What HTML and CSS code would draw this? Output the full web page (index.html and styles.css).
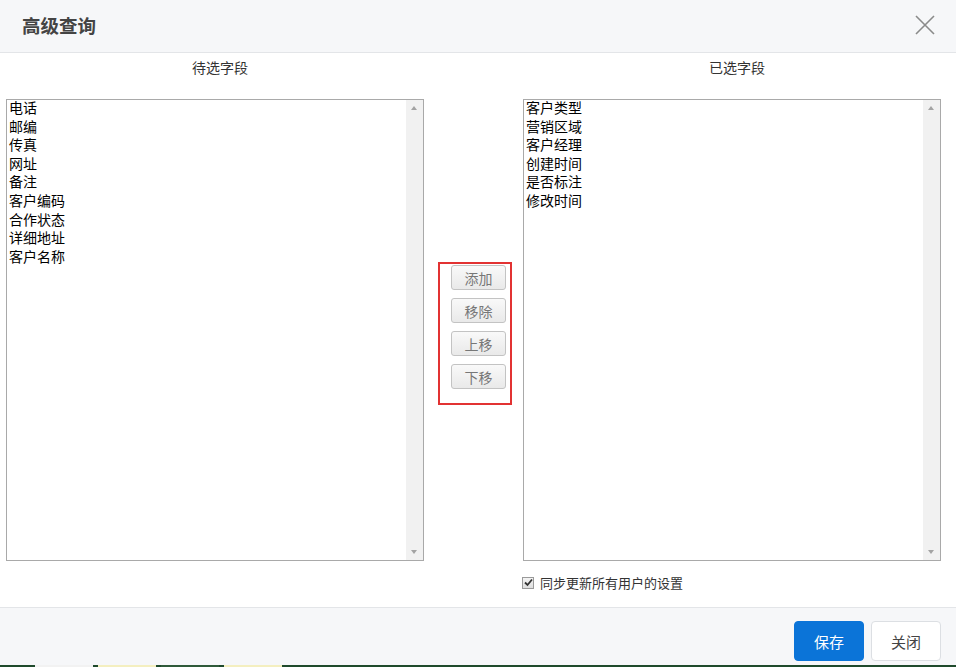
FILE: index.html
```html
<!DOCTYPE html>
<html lang="zh-CN">
<head>
    <meta charset="UTF-8">
    <title>高级查询</title>
    <link rel="stylesheet" href="styles.css">
</head>
<body>
<div class="dialog">
    <div class="dlg-head">
        <h3 class="dlg-title">高级查询</h3>
        <span class="dlg-close">
            <svg width="22" height="22" viewBox="0 0 22 22"><path d="M2 2L20 20M20 2L2 20" stroke="#8a8a8a" stroke-width="1.6" fill="none"/></svg>
        </span>
    </div>

    <div class="dlg-body">
        <div class="col">
            <p class="col-label">待选字段</p>
            <div class="listbox">
                <ul class="items">
                    <li>电话</li>
                    <li>邮编</li>
                    <li>传真</li>
                    <li>网址</li>
                    <li>备注</li>
                    <li>客户编码</li>
                    <li>合作状态</li>
                    <li>详细地址</li>
                    <li>客户名称</li>
                </ul>
                <div class="scroll"><span class="arr up"></span><span class="arr down"></span></div>
            </div>
        </div>

        <div class="mid">
            <div class="btn-box">
                <button class="mv-btn">添加</button>
                <button class="mv-btn">移除</button>
                <button class="mv-btn">上移</button>
                <button class="mv-btn">下移</button>
            </div>
        </div>

        <div class="col">
            <p class="col-label">已选字段</p>
            <div class="listbox">
                <ul class="items">
                    <li>客户类型</li>
                    <li>营销区域</li>
                    <li>客户经理</li>
                    <li>创建时间</li>
                    <li>是否标注</li>
                    <li>修改时间</li>
                </ul>
                <div class="scroll"><span class="arr up"></span><span class="arr down"></span></div>
            </div>
            <label class="sync">
                <span class="chk"><svg width="9" height="9" viewBox="0 0 9 9"><path d="M1 4.5L3.5 7L8 1.5" stroke="#333" stroke-width="1.8" fill="none"/></svg></span>
                同步更新所有用户的设置
            </label>
        </div>
    </div>

    <div class="dlg-foot">
        <button class="btn btn-save">保存</button>
        <button class="btn btn-close">关闭</button>
    </div>
    <div class="taskbar">
        <span class="tb-cell light"></span><span class="tb-cell yellow"></span><span class="tb-cell"></span><span class="tb-cell yellow"></span>
    </div>
</div>
</body>
</html>
```

FILE: styles.css
```css
*{
    box-sizing: border-box;
}
body{
    margin: 0;
    font-family: "Noto Sans CJK SC", "Liberation Sans", sans-serif;
    color: #333;
    background: #fff;
}

.dialog{
    width: 956px;
    height: 667px;
    display: flex;
    flex-direction: column;
}

.dlg-head{
    height: 53px;
    background: #f6f7f9;
    border-bottom: 1px solid #e3e5e8;
    display: flex;
    align-items: center;
    justify-content: space-between;
    padding: 0 20px 3px 22px;
}
.dlg-title{
    margin: 0;
    font-size: 18.5px;
    font-weight: bold;
    color: #444;
}
.dlg-close{
    display: flex;
}

.dlg-body{
    flex: 1;
    display: flex;
    padding: 0 15px 0 6px;
}
.col{
    width: 418px;
    display: flex;
    flex-direction: column;
}
.col-label{
    margin: 0;
    height: 46px;
    padding: 4px 0 0 10px;
    text-align: center;
    font-size: 14px;
    line-height: 20px;
}

.listbox{
    height: 462px;
    border: 1px solid #a9a9a9;
    display: flex;
}
.items{
    flex: 1;
    list-style: none;
    margin: -2px 0 0;
    padding: 0 0 0 2px;
    font-size: 14px;
    line-height: 18.6px;
    color: #000;
}
.scroll{
    width: 17px;
    background: #f1f1f1;
    position: relative;
}
.arr{
    position: absolute;
    left: 5px;
    width: 0;
    height: 0;
    border-left: 3.5px solid transparent;
    border-right: 3.5px solid transparent;
}
.arr.up{
    top: 6px;
    border-bottom: 4px solid #a3a3a3;
}
.arr.down{
    bottom: 6px;
    border-top: 4px solid #a3a3a3;
}

.mid{
    width: 99px;
    padding: 209px 0 0 14px;
}
.btn-box{
    width: 74px;
    height: 143px;
    border: 2px solid #e23232;
    padding: 1px 0 0 11px;
    display: flex;
    flex-direction: column;
    gap: 8px;
}
.mv-btn{
    width: 55px;
    height: 25px;
    padding: 0;
    font-family: inherit;
    font-size: 14px;
    color: #777;
    background: linear-gradient(#f9f9f9, #e9e9e9);
    border: 1px solid #c3c3c3;
    border-radius: 3px;
}

.sync{
    display: flex;
    align-items: center;
    gap: 6px;
    margin-top: 12px;
    margin-left: -1px;
    font-size: 13px;
    color: #333;
}
.chk{
    width: 12px;
    height: 12px;
    border: 1px solid #9a9a9a;
    background: linear-gradient(#f4f4f4, #dedede);
    display: flex;
    align-items: center;
    justify-content: center;
}

.dlg-foot{
    height: 58px;
    background: #f6f7f9;
    border-top: 1px solid #e3e5e8;
    display: flex;
    justify-content: flex-end;
    align-items: flex-end;
    gap: 7px;
    padding: 0 15px 4px 0;
}
.btn{
    width: 70px;
    height: 40px;
    font-family: inherit;
    font-size: 15px;
    border-radius: 4px;
}
.btn-save{
    background: #0b74d8;
    border: 1px solid #0b74d8;
    color: #fff;
}
.btn-close{
    background: #fff;
    border: 1px solid #dcdfe3;
    color: #444;
}

.taskbar{
    height: 2px;
    background: #1f4a2c;
    display: flex;
    gap: 5px;
    padding-left: 35px;
}
.tb-cell{
    width: 58px;
    background: #2f5a3a;
}
.tb-cell.light{
    background: #f2f2f2;
}
.tb-cell.yellow{
    background: #f4efc0;
}
```
